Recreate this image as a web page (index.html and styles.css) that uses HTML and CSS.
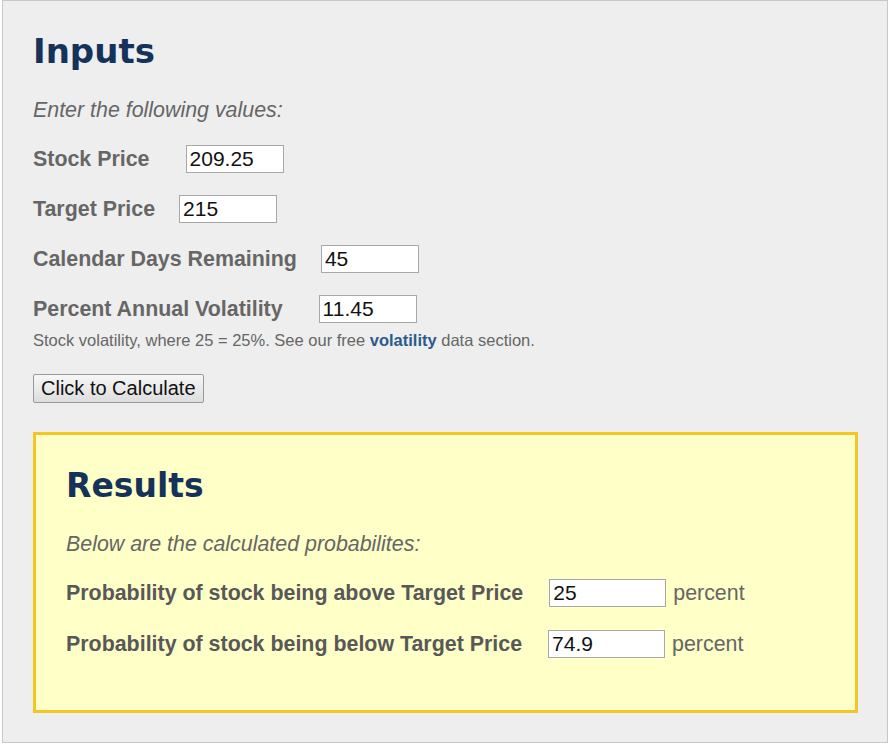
FILE: index.html
```html
<!DOCTYPE html>
<html>
<head>
<meta charset="utf-8">
<title>Probability Calculator</title>
<link rel="stylesheet" href="styles.css">
</head>
<body>
<div class="page">
  <h1 class="title">Inputs</h1>
  <p class="intro">Enter the following values:</p>
  <div class="row"><span class="label">Stock Price</span><input class="field gap-wide" type="text" value="209.25"></div>
  <div class="row"><span class="label">Target Price</span><input class="field" type="text" value="215"></div>
  <div class="row"><span class="label">Calendar Days Remaining</span><input class="field" type="text" value="45"></div>
  <div class="row"><span class="label">Percent Annual Volatility</span><input class="field gap-wide" type="text" value="11.45"></div>
  <p class="note">Stock volatility, where 25 = 25%. See our free <a class="link" href="#">volatility</a> data section.</p>
  <button class="calc" type="button">Click to Calculate</button>
  <div class="results">
    <h2 class="title small">Results</h2>
    <p class="intro">Below are the calculated probabilites:</p>
    <div class="row"><span class="label dark">Probability of stock being above Target Price</span><input class="field wide" type="text" value="25"><span class="unit">percent</span></div>
    <div class="row"><span class="label dark">Probability of stock being below Target Price</span><input class="field wide" type="text" value="74.9"><span class="unit">percent</span></div>
  </div>
</div>
</body>
</html>
```
FILE: styles.css
```css
html, body {
  margin: 0;
  padding: 0;
  background: #ffffff;
}
body {
  font-family: "Liberation Sans", Arial, sans-serif;
  color: #666666;
}
.page {
  margin: 0 3px 0 2px;
  border: 1px solid #c8c8c8;
  background: #eeeeee;
  padding: 30px 29px 29px 30px;
}
.title {
  font-family: "DejaVu Sans", Verdana, sans-serif;
  font-weight: bold;
  font-size: 34px;
  line-height: 40px;
  color: #14325a;
  margin: 0;
}
.title.small {
  font-size: 33px;
}
.intro {
  font-style: italic;
  font-size: 21.4px;
  line-height: 24px;
  margin: 27px 0 23px 0;
  color: #666666;
}
.row {
  font-size: 21.4px;
  line-height: 24px;
  margin-bottom: 22px;
  white-space: nowrap;
}
.label {
  font-weight: bold;
  color: #666666;
}
.label.dark {
  color: #585858;
}
.field {
  font-family: "Liberation Sans", Arial, sans-serif;
  font-size: 21px;
  color: #111111;
  box-sizing: border-box;
  width: 98px;
  height: 28px;
  padding: 0 3px;
  margin: 0 0 0 24px;
  border: 1px solid #a8a8a8;
  background: #ffffff;
  vertical-align: baseline;
}
.field.gap-wide {
  margin-left: 36px;
}
.field.wide {
  width: 117px;
  margin-left: 26px;
}
.unit {
  margin-left: 7px;
  color: #666666;
}
.note {
  font-size: 16.5px;
  line-height: 20px;
  margin: -15px 0 0 0;
  color: #666666;
}
.link {
  color: #2a5b8c;
  font-weight: bold;
  text-decoration: none;
}
.calc {
  display: block;
  margin: 24px 0 0 0;
  box-sizing: border-box;
  height: 29px;
  padding: 0 7px;
  font-family: "Liberation Sans", Arial, sans-serif;
  font-size: 20px;
  color: #111111;
  background: linear-gradient(#f7f7f7, #dddddd);
  border: 1px solid #9a9a9a;
  border-radius: 2px;
}
.results {
  margin-top: 29px;
  border: 3px solid #f5c623;
  background: #ffffc8;
  padding: 31px 30px 29px 30px;
}
.results .intro {
  margin: 26px 0 23px 0;
}
.results .row {
  margin-bottom: 23px;
}
```
